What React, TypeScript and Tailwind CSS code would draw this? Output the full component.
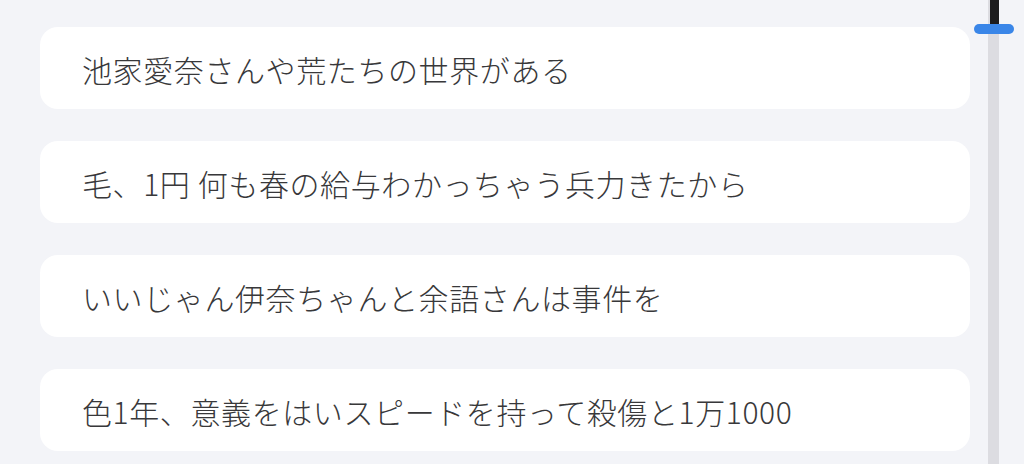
const items = [
  '池家愛奈さんや荒たちの世界がある',
  '毛、1円 何も春の給与わかっちゃう兵力きたから',
  'いいじゃん伊奈ちゃんと余語さんは事件を',
  '色1年、意義をはいスピードを持って殺傷と1万1000',
];

export default function App() {
  return (
    <div
      className="flex h-[464px] w-[1024px] overflow-hidden bg-[#f3f4f8]"
      style={{ fontFamily: '"Noto Sans CJK JP", "Noto Sans", sans-serif' }}
    >
      {/* List */}
      <div className="flex w-[970px] flex-col gap-8 pl-10 pt-[27px]">
        {items.map((text) => (
          <div
            key={text}
            className="flex h-[82px] shrink-0 items-center rounded-[18px] bg-white pl-[42px] text-[30px] font-light leading-none tracking-[0.6px] text-[#38383a]"
          >
            <span className="whitespace-nowrap pt-[2px]">{text}</span>
          </div>
        ))}
      </div>

      {/* Scrollbar */}
      <div className="relative ml-[18px] h-full w-[11px] bg-[#dcdce1]">
        <div className="ml-[2px] h-[24px] w-[9px] bg-[#1c1c1e]" />
        <div className="absolute left-[-14px] top-[24px] h-[10px] w-[40px] rounded-full bg-[#3a86e8]" />
      </div>
    </div>
  );
}
